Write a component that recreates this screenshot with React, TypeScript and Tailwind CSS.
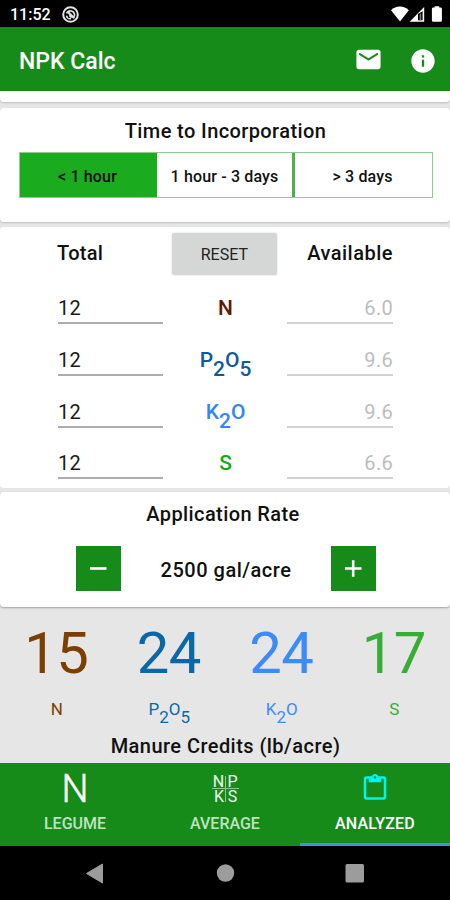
import React from "react";

type Nutrient = "N" | "P2O5" | "K2O" | "S";

function Formula({ name, sub }: { name: Nutrient; sub: string }) {
  const parts = name.split(/(\d)/).filter(Boolean);
  return (
    <>
      {parts.map((p, i) =>
        /\d/.test(p) ? (
          <span key={i} className={`relative ${sub}`}>
            {p}
          </span>
        ) : (
          <span key={i}>{p}</span>
        ),
      )}
    </>
  );
}

const rows: { name: Nutrient; color: string; available: string; height: string }[] = [
  { name: "N", color: "text-[#5c1a06]", available: "6.0", height: "h-[49px]" },
  { name: "P2O5", color: "text-[#0d5c97]", available: "9.6", height: "h-[52px]" },
  { name: "K2O", color: "text-[#3385f5]", available: "9.6", height: "h-[52px]" },
  { name: "S", color: "text-[#16a815]", available: "6.6", height: "h-[51px]" },
];

const credits: { name: Nutrient; color: string; value: string }[] = [
  { name: "N", color: "text-[#7b3f00]", value: "15" },
  { name: "P2O5", color: "text-[#0a68a6]", value: "24" },
  { name: "K2O", color: "text-[#3c8bf8]", value: "24" },
  { name: "S", color: "text-[#38ad35]", value: "17" },
];

function StatusBar() {
  return (
    <div className="flex h-[27px] items-center bg-black pl-[10px] pr-[8px] text-white">
      <span className="w-[52px] pt-[3px] text-[16px] leading-[20px] font-medium">11:52</span>
      <svg className="mt-[2px] h-[17px] w-[17px]" viewBox="0 0 17 17" fill="none" stroke="#e4e4e4">
        <circle cx="8.5" cy="8.5" r="7.3" strokeWidth="2" />
        <path d="M4.6 7.4A4.2 4.2 0 0 1 12.6 8.6L11.6 12.2" strokeWidth="1.6" />
        <path d="M4.4 9.6A4.2 4.2 0 0 0 9 12.8" strokeWidth="1.5" />
        <path d="M5.5 5.4L12 12" strokeWidth="2.2" />
        <path d="M7.2 9.4l2.4 2.4" strokeWidth="1.6" />
      </svg>
      <svg className="ml-auto h-[16px] w-[52px]" viewBox="390 6 52 16" fill="#fff">
        <path d="M391 10.2C395.8 5.4 404 5.4 408.8 10.2L400 21.6Z" />
        <path d="M424.2 7v14.800H409.600Z" />
        <path d="M418 14v6.200h4.600V11.200z" fill="#000" />
        <path d="M419.600 14.800v5.400h1.600v-7.400z" fill="#777" />
        <path d="M434.6 6.2h4.6v1.3h1.3q1.4 0 1.4 1.4V20.400q0 1.4-1.400 1.400h-7.200q-1.400 0-1.400-1.400V8.900q0-1.400 1.400-1.400h1.300z" />
      </svg>
    </div>
  );
}

function AppBar() {
  return (
    <header className="flex h-16 items-center bg-[#178b1a] pl-[19px] pr-[13px] text-white">
      <h1 className="pt-[5px] text-[23px] leading-[28px] font-medium">NPK Calc</h1>
      <svg className="mt-px ml-auto h-[29px] w-[29px]" viewBox="0 0 24 24" fill="currentColor">
        <path d="M20 4H4c-1.100 0-2 .9-2 2v12c0 1.100.9 2 2 2h16c1.100 0 2-.9 2-2V6c0-1.100-.9-2-2-2zm-.400 4.250l-7.070 4.420c-.320.200-.740.200-1.060 0L4.400 8.250c-.250-.160-.400-.430-.400-.720 0-.670.730-1.070 1.300-.720L12 11l6.700-4.190c.570-.350 1.300.050 1.300.720 0 .290-.150.560-.400.720z" />
      </svg>
      <svg className="mt-[3px] ml-[26px] h-[28px] w-[28px]" viewBox="0 0 24 24" fill="currentColor">
        <path d="M12 2C6.480 2 2 6.480 2 12s4.480 10 10 10 10-4.480 10-10S17.520 2 12 2zm1 15h-2v-6h2v6zm0-8h-2V7h2v2z" />
      </svg>
    </header>
  );
}

function Incorporation() {
  return (
    <section className="mt-[6px] h-[114px] rounded-[4px] bg-white px-[19px] pt-[11px] shadow-[0_1px_2px_rgba(0,0,0,0.18)]">
      <h2 className="pl-px text-center text-[20px] leading-[24px] font-medium tracking-[0.4px]">
        Time to Incorporation
      </h2>
      <div className="mt-[9px] mr-[-2px] flex h-[46px] border-[1.5px] border-[#8fcb91] text-[16px] font-medium tracking-[0.15px]">
        <button className="w-[137px] bg-[#1bab1f] pt-[3px] pr-[2px]">&lt; 1 hour</button>
        <button className="w-[138px] border-r-[3px] border-[#4cae50] pt-[3px]">1 hour - 3 days</button>
        <button className="flex-1 pt-[3px] pr-[2px]">&gt; 3 days</button>
      </div>
    </section>
  );
}

function Analysis() {
  return (
    <section className="mt-[5px] h-[261px] rounded-[4px] bg-white px-[57px] pt-[6px]">
      <div className="flex h-[42px] items-center">
        <span className="w-[115px] pb-[2px] text-[20px] font-medium tracking-[0.3px]">Total</span>
        <button className="h-[42px] w-[106px] rounded-[2px] bg-[#d5d7d6] pt-px text-[16px] text-[#222] shadow-[0_0_2px_rgba(0,0,0,0.2)]">
          RESET
        </button>
        <span className="ml-[30px] pb-[2px] text-[20px] font-medium tracking-[0.5px]">Available</span>
      </div>
      <div>
        {rows.map((r) => (
          <div key={r.name} className={`flex items-end ${r.height}`}>
            <div className="mr-px ml-px h-[34px] w-[105px] border-b-2 border-[#adadad] pt-[5px] text-[20px] leading-[26px] tracking-[0.3px] text-[#1a1a1a]">
              12
            </div>
            <div
              className={`h-[34px] flex-1 pt-[5px] text-center text-[21px] leading-[26px] font-medium ${r.color}`}
            >
              <Formula name={r.name} sub="top-[9px]" />
            </div>
            <div className="h-[34px] w-[106px] border-b-2 border-[#d2d2d2] pt-[5px] text-right text-[20px] leading-[26px] tracking-[0.3px] text-[#bdbdbd]">
              {r.available}
            </div>
          </div>
        ))}
      </div>
    </section>
  );
}

function StepIcon({ plus }: { plus?: boolean }) {
  return (
    <svg className="h-[45px] w-[45px]" viewBox="0 0 45 45" stroke="#fff" strokeWidth="2.6">
      <path d={plus ? "M14 22.500h16.500M22.200 14.200v16.600" : "M14 22.500h16.500"} />
    </svg>
  );
}

function Rate() {
  return (
    <section className="mt-[4px] h-[115px] rounded-[4px] bg-white pt-[10px] shadow-[0_1px_2px_rgba(0,0,0,0.3)]">
      <h2 className="pr-[4px] text-center text-[20px] leading-[24px] font-medium tracking-[0.4px]">
        Application Rate
      </h2>
      <div className="mt-[20px] flex items-center justify-between pr-[74px] pl-[76px]">
        <button className="h-[45px] w-[45px] bg-[#178b1a]">
          <StepIcon />
        </button>
        <span className="pt-[2px] text-[20px] font-medium tracking-[0.5px]">2500 gal/acre</span>
        <button className="h-[45px] w-[45px] bg-[#178b1a]">
          <StepIcon plus />
        </button>
      </div>
    </section>
  );
}

function Credits() {
  return (
    <section className="h-[156px] pt-[16px]">
      <div className="grid grid-cols-4">
        {credits.map((c) => (
          <div key={c.name} className={`text-center ${c.color}`}>
            <div className="text-[58px] leading-[61px] tracking-[-0.5px]">{c.value}</div>
            <div className="mt-[14px] pl-px text-[17px] leading-[22px]">
              <Formula name={c.name} sub="top-[8px]" />
            </div>
          </div>
        ))}
      </div>
      <h2 className="mt-[14px] pl-px text-center text-[20px] leading-[24px] font-medium tracking-[0.45px]">
        Manure Credits (lb/acre)
      </h2>
    </section>
  );
}

function Tabs() {
  return (
    <nav className="grid h-[83px] grid-cols-3 bg-[#178b1a] text-center text-[16px] font-medium text-white">
      <div className="flex flex-col items-center">
        <span className="mt-[8px] h-[34px] text-[38px] leading-[36px] font-light [-webkit-text-stroke:0.5px_#fff]">N</span>
        <span className="mt-[8px] leading-[22px] text-[#bfe3c0]">LEGUME</span>
      </div>
      <div className="flex flex-col items-center">
        <svg
          className="mt-[9px] h-[33px] w-[30px] overflow-visible"
          viewBox="0 -2 30 33"
          fill="#eef8ee"
          stroke="#8cc98e"
        >
          <path d="M2 14.500h27M15.500 2v26" strokeWidth="1" />
          <g stroke="none" fontSize="16" fontWeight="400" textAnchor="middle">
            <text x="8.500" y="13">N</text>
            <text x="22.500" y="13">P</text>
            <text x="9" y="27.500">K</text>
            <text x="22.500" y="27.500">S</text>
          </g>
        </svg>
        <span className="mt-[8px] leading-[22px] text-[#bfe3c0]">AVERAGE</span>
      </div>
      <div className="flex flex-col items-center border-b-[3px] border-[#4a8fd6]">
        <svg className="mt-[11px] h-[28px] w-[30px]" viewBox="0 0 24 24" preserveAspectRatio="none" fill="#00f5f0">
          <path d="M19 2h-4.180C14.400.840 13.300 0 12 0c-1.300 0-2.400.840-2.820 2H5c-1.100 0-2 .9-2 2v16c0 1.100.9 2 2 2h14c1.100 0 2-.9 2-2V4c0-1.100-.9-2-2-2zm-7 0c.550 0 1 .450 1 1s-.450 1-1 1-1-.450-1-1 .450-1 1-1zm7 18H5V4h2v3h10V4h2v16z" />
        </svg>
        <span className="mt-[11px] leading-[22px] tracking-[0.2px]">ANALYZED</span>
      </div>
    </nav>
  );
}

function SystemNav() {
  return (
    <div className="h-[54px] bg-black">
      <svg className="h-[54px] w-[450px]" viewBox="0 0 450 54" fill="#9c9c9c">
        <path d="M86.500 27.500L102.500 18V37Z" stroke="#9c9c9c" strokeLinejoin="round" />
        <circle cx="225.500" cy="27" r="8.700" />
        <rect x="345.500" y="18" width="18.500" height="18.500" rx="1.500" />
      </svg>
    </div>
  );
}

export default function App() {
  return (
    <div className="h-[900px] w-[450px] overflow-hidden bg-[#e6e6e6] font-['Roboto',sans-serif] text-[#111]">
      <StatusBar />
      <AppBar />
      <div className="h-[11px] rounded-b-[4px] bg-white shadow-[0_1px_2px_rgba(0,0,0,0.18)]" />
      <Incorporation />
      <Analysis />
      <Rate />
      <Credits />
      <Tabs />
      <SystemNav />
    </div>
  );
}
